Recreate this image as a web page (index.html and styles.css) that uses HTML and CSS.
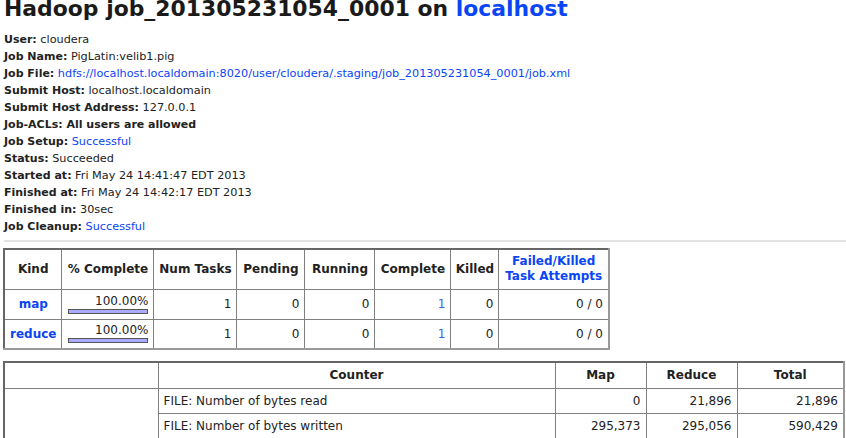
FILE: index.html
```html
<!DOCTYPE html>
<html>
<head>
<meta charset="utf-8">
<link rel="stylesheet" href="styles.css">
</head>
<body>
<h1 class="title">Hadoop job_201305231054_0001 on <a class="link" href="#">localhost</a></h1>
<div class="info">
<div class="line"><b>User:</b> cloudera</div>
<div class="line"><b>Job Name:</b> PigLatin:velib1.pig</div>
<div class="line"><b>Job File:</b> <a class="link" href="#">hdfs://localhost.localdomain:8020/user/cloudera/.staging/job_201305231054_0001/job.xml</a></div>
<div class="line"><b>Submit Host:</b> localhost.localdomain</div>
<div class="line"><b>Submit Host Address:</b> 127.0.0.1</div>
<div class="line"><b>Job-ACLs: All users are allowed</b></div>
<div class="line"><b>Job Setup:</b> <a class="link" href="#">Successful</a></div>
<div class="line"><b>Status:</b> Succeeded</div>
<div class="line"><b>Started at:</b> Fri May 24 14:41:47 EDT 2013</div>
<div class="line"><b>Finished at:</b> Fri May 24 14:42:17 EDT 2013</div>
<div class="line"><b>Finished in:</b> 30sec</div>
<div class="line"><b>Job Cleanup:</b> <a class="link" href="#">Successful</a></div>
</div>
<hr class="sep">
<table class="grid kinds">
<colgroup>
<col style="width:57px"><col style="width:92px"><col style="width:83px"><col style="width:68px"><col style="width:70px"><col style="width:76px"><col style="width:48px"><col style="width:110px">
</colgroup>
<tr class="head">
<th>Kind</th><th>% Complete</th><th>Num Tasks</th><th>Pending</th><th>Running</th><th>Complete</th><th>Killed</th><th><a class="link" href="#">Failed/Killed<br>Task Attempts</a></th>
</tr>
<tr class="row">
<th class="kind"><a class="link" href="#">map</a></th>
<td class="num"><div class="pct">100.00%</div><div class="bar"><div class="fill" style="width:100%"></div></div></td>
<td class="num">1</td><td class="num">0</td><td class="num">0</td><td class="num"><a class="link light" href="#">1</a></td><td class="num">0</td><td class="num">0 / 0</td>
</tr>
<tr class="row">
<th class="kind"><a class="link" href="#">reduce</a></th>
<td class="num"><div class="pct">100.00%</div><div class="bar"><div class="fill" style="width:100%"></div></div></td>
<td class="num">1</td><td class="num">0</td><td class="num">0</td><td class="num"><a class="link light" href="#">1</a></td><td class="num">0</td><td class="num">0 / 0</td>
</tr>
</table>
<table class="grid counters">
<colgroup>
<col style="width:154px"><col style="width:397px"><col style="width:91px"><col style="width:91px"><col style="width:107px">
</colgroup>
<tr class="chead">
<th></th><th>Counter</th><th>Map</th><th>Reduce</th><th>Total</th>
</tr>
<tr class="crow">
<td class="group" rowspan="10">File System Counters</td>
<td>FILE: Number of bytes read</td><td class="num">0</td><td class="num">21,896</td><td class="num">21,896</td>
</tr>
<tr class="crow"><td>FILE: Number of bytes written</td><td class="num">295,373</td><td class="num">295,056</td><td class="num">590,429</td></tr>
<tr class="crow"><td>FILE: Number of read operations</td><td class="num">0</td><td class="num">0</td><td class="num">0</td></tr>
<tr class="crow"><td>FILE: Number of large read operations</td><td class="num">0</td><td class="num">0</td><td class="num">0</td></tr>
<tr class="crow"><td>FILE: Number of write operations</td><td class="num">0</td><td class="num">0</td><td class="num">0</td></tr>
<tr class="crow"><td>HDFS: Number of bytes read</td><td class="num">0</td><td class="num">0</td><td class="num">0</td></tr>
<tr class="crow"><td>HDFS: Number of bytes written</td><td class="num">0</td><td class="num">0</td><td class="num">0</td></tr>
<tr class="crow"><td>HDFS: Number of read operations</td><td class="num">0</td><td class="num">0</td><td class="num">0</td></tr>
<tr class="crow"><td>HDFS: Number of large read operations</td><td class="num">0</td><td class="num">0</td><td class="num">0</td></tr>
<tr class="crow"><td>HDFS: Number of write operations</td><td class="num">0</td><td class="num">0</td><td class="num">0</td></tr>
</table>
</body>
</html>
```

FILE: styles.css
```css
html {
  overflow: hidden;
  background: #fff;
}
body {
  margin: 0;
  padding: 0 0 0 4px;
  font-family: "DejaVu Sans", sans-serif;
  font-size: 11px;
  color: #222;
}
.link {
  color: #0a45f5;
  text-decoration: none;
}
.link.light {
  color: #3366f0;
}
.title {
  font-size: 21.9px;
  font-weight: bold;
  margin: -4px 0 0 0;
  line-height: 26px;
  color: #1a1a1a;
}
.info {
  margin-top: 9px;
  font-size: 11.25px;
}
.info b {
  font-size: 11px;
}
.line {
  line-height: 17px;
}
.sep {
  margin: 5px 0 6px 0;
  border: 0;
  border-top: 2px solid #e2e2e2;
  height: 0;
}
.grid {
  border-collapse: collapse;
  table-layout: fixed;
  margin-left: -1px;
  font-size: 12px;
  border: 2px solid #666;
  border-right-color: #999;
  border-bottom-color: #999;
}
.grid th,
.grid td {
  border: 1px solid #808080;
  padding: 0 5px;
  white-space: nowrap;
}
.grid th {
  font-weight: bold;
  text-align: center;
}
.kinds .head {
  height: 40px;
}
.kinds .head th {
  line-height: 15px;
  padding: 0 3px;
}
.kinds .row {
  height: 30px;
}
.kind .link {
  font-weight: bold;
}
.num {
  text-align: right;
}
.pct {
  line-height: 13px;
}
.bar {
  margin: 1px 0 0 1px;
  height: 3px;
  border: 1px solid #555;
  background: #fff;
}
.fill {
  height: 100%;
  background: #aaaaff;
}
.counters {
  margin-top: 11px;
}
.counters .chead {
  height: 26px;
}
.counters .crow {
  height: 25px;
}
.counters td.group {
  text-align: left;
  vertical-align: middle;
}
```
